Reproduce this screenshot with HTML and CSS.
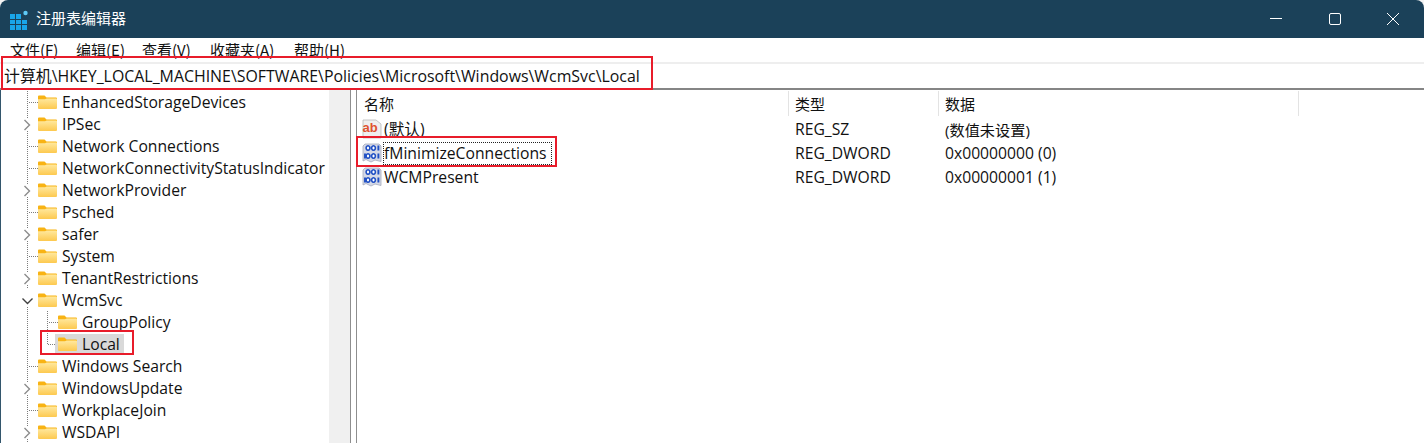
FILE: index.html
```html
<!DOCTYPE html>
<html lang="zh-CN">
<head>
<meta charset="utf-8">
<title>注册表编辑器</title>
<link rel="stylesheet" href="styles.css">
</head>
<body>
<svg class="defs" width="0" height="0" aria-hidden="true">
  <defs>
    <linearGradient id="fg" x1="0" y1="0" x2="0" y2="1"><stop offset="0" stop-color="#ffe9a0"/><stop offset="1" stop-color="#fdc94f"/></linearGradient>
    <symbol id="folder" viewBox="0 0 19 14">
      <path d="M0 1.5Q0 .5 1 .5H6.5L8.5 2.5H18Q19 2.5 19 3.5V5H0Z" fill="#f8b314"/>
      <path d="M0 4.2H7L8.7 3.4H18Q19 3.4 19 4.4V13Q19 14 18 14H1Q0 14 0 13Z" fill="url(#fg)"/>
    </symbol>
    <symbol id="tee" viewBox="0 0 16 22">
      <path d="M5.5 0V22M7 11.5H16" stroke="#7d7d7d" stroke-dasharray="1 1" fill="none"/>
    </symbol>
    <symbol id="ell" viewBox="0 0 16 22">
      <path d="M5.5 0V11.5H16" stroke="#7d7d7d" stroke-dasharray="1 1" fill="none"/>
    </symbol>
    <symbol id="vert" viewBox="0 0 16 22">
      <path d="M5.5 0V22" stroke="#7d7d7d" stroke-dasharray="1 1" fill="none"/>
    </symbol>
    <symbol id="chev" viewBox="0 0 16 22">
      <path d="M5.5 0V5M5.5 18V22" stroke="#7d7d7d" stroke-dasharray="1 1" fill="none"/>
      <path d="M2.5 7L7.5 12L2.5 17" stroke="#8c8c8c" stroke-width="1.4" fill="none"/>
    </symbol>
    <symbol id="down" viewBox="0 0 16 22">
      <path d="M5.5 18V22" stroke="#7d7d7d" stroke-dasharray="1 1" fill="none"/>
      <path d="M.5 9.5L5.5 14.5L10.5 9.5" stroke="#404040" stroke-width="1.4" fill="none"/>
    </symbol>
    <symbol id="bin" viewBox="0 0 20 20">
      <path d="M1 3V18L4 16.5L9 19L13 17L19 18.5V3L17 1H3Z" fill="#d5d9e6" stroke="#a4abbd" stroke-width=".8"/>
      <path d="M6 2.7a1.9 2.3 0 1 0 .01 0ZM11.5 2.7a1.9 2.3 0 1 0 .01 0ZM6 10.7a1.9 2.3 0 1 0 .01 0ZM11.5 10.7a1.9 2.3 0 1 0 .01 0Z" fill="#fff" stroke="#1f4fc4" stroke-width="1.6"/>
      <path d="M16.4 2.6V7.6M3 10.6V15.4M16.4 10.6V15.4" stroke="#1f4fc4" stroke-width="1.9"/>
    </symbol>
    <symbol id="sz" viewBox="0 0 20 20">
      <path d="M1 1H14L19 5V19H1Z" fill="#efefef" stroke="#b9b9b9" stroke-width=".8"/>
      <text x="0.5" y="13" class="ab">ab</text>
    </symbol>
  </defs>
</svg>
<div class="window">
  <header class="titlebar">
    <svg class="appicon" width="20" height="20" viewBox="0 0 20 20">
      <path d="M0 4H5V9H0ZM6 4H11V9H6ZM0 10H5V14H0ZM6 10H11V14H6ZM12 10H17V14H12ZM0 15H5V20H0ZM6 15H11V20H6ZM12 15H17V20H12Z" fill="#19a5e8"/>
      <circle cx="15.5" cy="3" r="2.2" fill="#5fc9f5"/>
    </svg>
    <span class="title">注册表编辑器</span>
    <div class="controls">
      <svg width="14" height="14" viewBox="0 0 14 14"><path d="M1 6.5H13" stroke="#fff" stroke-width="1"/></svg>
      <svg width="14" height="14" viewBox="0 0 14 14"><rect x="1.5" y="1.5" width="11" height="11" rx="1.5" fill="none" stroke="#fff"/></svg>
      <svg width="14" height="14" viewBox="0 0 14 14"><path d="M1 1L13 13M13 1L1 13" stroke="#fff" stroke-width="1"/></svg>
    </div>
  </header>
  <nav class="menu">
    <span class="m1">文件(F)</span>
    <span class="m2">编辑(E)</span>
    <span class="m3">查看(V)</span>
    <span class="m4">收藏夹(A)</span>
    <span class="m5">帮助(H)</span>
  </nav>
  <div class="address">计算机\HKEY_LOCAL_MACHINE\SOFTWARE\Policies\Microsoft\Windows\WcmSvc\Local</div>
  <main class="panes">
    <aside class="tree">
      <div class="rows">
        <div class="row"><svg class="tw"><use href="#tee"/></svg><svg class="fd"><use href="#folder"/></svg><span class="lbl">EnhancedStorageDevices</span></div>
        <div class="row"><svg class="tw"><use href="#chev"/></svg><svg class="fd"><use href="#folder"/></svg><span class="lbl">IPSec</span></div>
        <div class="row"><svg class="tw"><use href="#tee"/></svg><svg class="fd"><use href="#folder"/></svg><span class="lbl">Network Connections</span></div>
        <div class="row"><svg class="tw"><use href="#tee"/></svg><svg class="fd"><use href="#folder"/></svg><span class="lbl">NetworkConnectivityStatusIndicator</span></div>
        <div class="row"><svg class="tw"><use href="#chev"/></svg><svg class="fd"><use href="#folder"/></svg><span class="lbl">NetworkProvider</span></div>
        <div class="row"><svg class="tw"><use href="#tee"/></svg><svg class="fd"><use href="#folder"/></svg><span class="lbl">Psched</span></div>
        <div class="row"><svg class="tw"><use href="#chev"/></svg><svg class="fd"><use href="#folder"/></svg><span class="lbl">safer</span></div>
        <div class="row"><svg class="tw"><use href="#tee"/></svg><svg class="fd"><use href="#folder"/></svg><span class="lbl">System</span></div>
        <div class="row"><svg class="tw"><use href="#chev"/></svg><svg class="fd"><use href="#folder"/></svg><span class="lbl">TenantRestrictions</span></div>
        <div class="row"><svg class="tw"><use href="#down"/></svg><svg class="fd"><use href="#folder"/></svg><span class="lbl">WcmSvc</span></div>
        <div class="row"><svg class="tw"><use href="#vert"/></svg><svg class="tw2"><use href="#tee"/></svg><svg class="fd"><use href="#folder"/></svg><span class="lbl">GroupPolicy</span></div>
        <div class="row"><svg class="tw"><use href="#vert"/></svg><svg class="tw2"><use href="#ell"/></svg><div class="sel"><svg class="fd"><use href="#folder"/></svg><span class="lbl">Local</span></div></div>
        <div class="row"><svg class="tw"><use href="#tee"/></svg><svg class="fd"><use href="#folder"/></svg><span class="lbl">Windows Search</span></div>
        <div class="row"><svg class="tw"><use href="#chev"/></svg><svg class="fd"><use href="#folder"/></svg><span class="lbl">WindowsUpdate</span></div>
        <div class="row"><svg class="tw"><use href="#tee"/></svg><svg class="fd"><use href="#folder"/></svg><span class="lbl">WorkplaceJoin</span></div>
        <div class="row"><svg class="tw"><use href="#chev"/></svg><svg class="fd"><use href="#folder"/></svg><span class="lbl">WSDAPI</span></div>
      </div>
      <div class="track"></div>
    </aside>
    <div class="splitter"></div>
    <section class="list">
      <div class="head">
        <span class="hc">名称</span><span class="hc">类型</span><span class="hc">数据</span><span class="hc hc-end"></span>
      </div>
      <div class="item">
        <span class="name"><svg class="ic"><use href="#sz"/></svg><span class="nm">(默认)</span></span><span class="cell">REG_SZ</span><span class="cell cn">(数值未设置)</span>
      </div>
      <div class="item">
        <span class="name"><svg class="ic"><use href="#bin"/></svg><span class="nm focus">fMinimizeConnections</span></span><span class="cell">REG_DWORD</span><span class="cell">0x00000000 (0)</span>
      </div>
      <div class="item">
        <span class="name"><svg class="ic"><use href="#bin"/></svg><span class="nm">WCMPresent</span></span><span class="cell">REG_DWORD</span><span class="cell">0x00000001 (1)</span>
      </div>
    </section>
  </main>
  <div class="mark mark-addr"></div>
  <div class="mark mark-val"></div>
  <div class="mark mark-key"></div>
</div>
</body>
</html>
```

FILE: styles.css
```css
* { box-sizing: border-box; }
html, body { margin: 0; height: 100%; background: #f3f3f3; }
.defs { position: absolute; }
.window {
  position: relative;
  width: 1424px;
  height: 443px;
  overflow: hidden;
  background: #fff;
  border-radius: 8px 8px 0 0;
  font-family: "Open Sans", "Noto Sans CJK SC", sans-serif;
  font-size: 15.7px;
  color: #111;
  display: flex;
  flex-direction: column;
}
.titlebar {
  height: 38px;
  flex: none;
  background: #1b4159;
  display: flex;
  align-items: center;
  padding-left: 10px;
  color: #fff;
}
.appicon { flex: none; margin-top: 2px; }
.title { margin: -4px 0 0 6px; font-family: "Noto Sans CJK SC", sans-serif; font-size: 15px; }
.controls {
  margin-left: auto;
  display: flex;
  gap: 44.5px;
  padding-right: 24px;
  align-items: center;
}
.controls svg { display: block; }
.menu {
  height: 24px;
  flex: none;
  display: flex;
  align-items: center;
  padding: 0 0 2px 10px;
  font-family: "Noto Sans CJK SC", sans-serif;
  font-size: 15px;
}
.menu span { white-space: nowrap; }
.m1, .m2, .m3, .m4, .m5 { display: block; }
.m1, .m2 { width: 66px; }
.m3 { width: 68px; }
.m4 { width: 84px; }
.address {
  height: 28px;
  flex: none;
  border-top: 2px solid #eeeeee;
  border-bottom: 2px solid #858585;
  padding-left: 4px;
  line-height: 24px;
  white-space: nowrap;
  font-size: 15.9px;
}
.panes { flex: 1; display: flex; min-height: 0; }
.tree {
  width: 350px;
  flex: none;
  display: flex;
  border-left: 1px solid #33566c;
}
.rows { width: 328px; padding: 1px 0 0 21px; overflow: hidden; }
.track { width: 21px; background: #f0f0f0; }
.row { height: 22px; display: flex; align-items: center; white-space: nowrap; }
.tw { width: 16px; height: 22px; flex: none; }
.tw2 { width: 16px; height: 22px; flex: none; margin-left: 4px; }
.fd { width: 19px; height: 14px; flex: none; }
.lbl { margin-left: 5px; line-height: 21px; }
.sel {
  display: flex;
  align-items: center;
  height: 21px;
  background: #d9d9d9;
  padding: 0 4px 0 3px;
  margin-left: -3px;
}
.splitter {
  width: 7px;
  flex: none;
  background: #fff;
  border-left: 1px solid #8e8e8e;
  border-right: 1px solid #8e8e8e;
}
.list { flex: 1; min-width: 0; }
.head {
  height: 27px;
  display: grid;
  grid-template-columns: 432px 150px 360px 1fr;
  align-items: center;
}
.hc {
  height: 25px;
  padding-left: 7px;
  line-height: 25px;
  border-right: 1px solid #e3e3e3;
  font-family: "Noto Sans CJK SC", sans-serif;
  font-size: 15px;
}
.hc:nth-child(n+2) { padding-left: 6px; }
.hc-end { border-right: 0; }
.item {
  height: 24px;
  display: grid;
  grid-template-columns: 432px 150px 360px;
  align-items: center;
}
.name { display: flex; align-items: center; padding-left: 5px; }
.ic { width: 20px; height: 20px; flex: none; }
.ab { font: bold 13px "Liberation Sans", sans-serif; fill: #e0522f; }
.nm { margin-left: 1px; padding: 0 5px 0 1px; line-height: 23px; white-space: nowrap; }
.focus { outline: 1px dotted #222; outline-offset: -1px; }
.cell { padding-left: 6px; white-space: nowrap; }
.cn { font-size: 15.2px; }
.mark { position: absolute; border: 2px solid #e81c2a; pointer-events: none; }
.mark-addr { left: 1px; top: 56px; width: 652px; height: 34px; }
.mark-val { left: 356px; top: 136px; width: 201px; height: 31px; }
.mark-key { left: 40px; top: 330px; width: 94px; height: 25px; }
```
